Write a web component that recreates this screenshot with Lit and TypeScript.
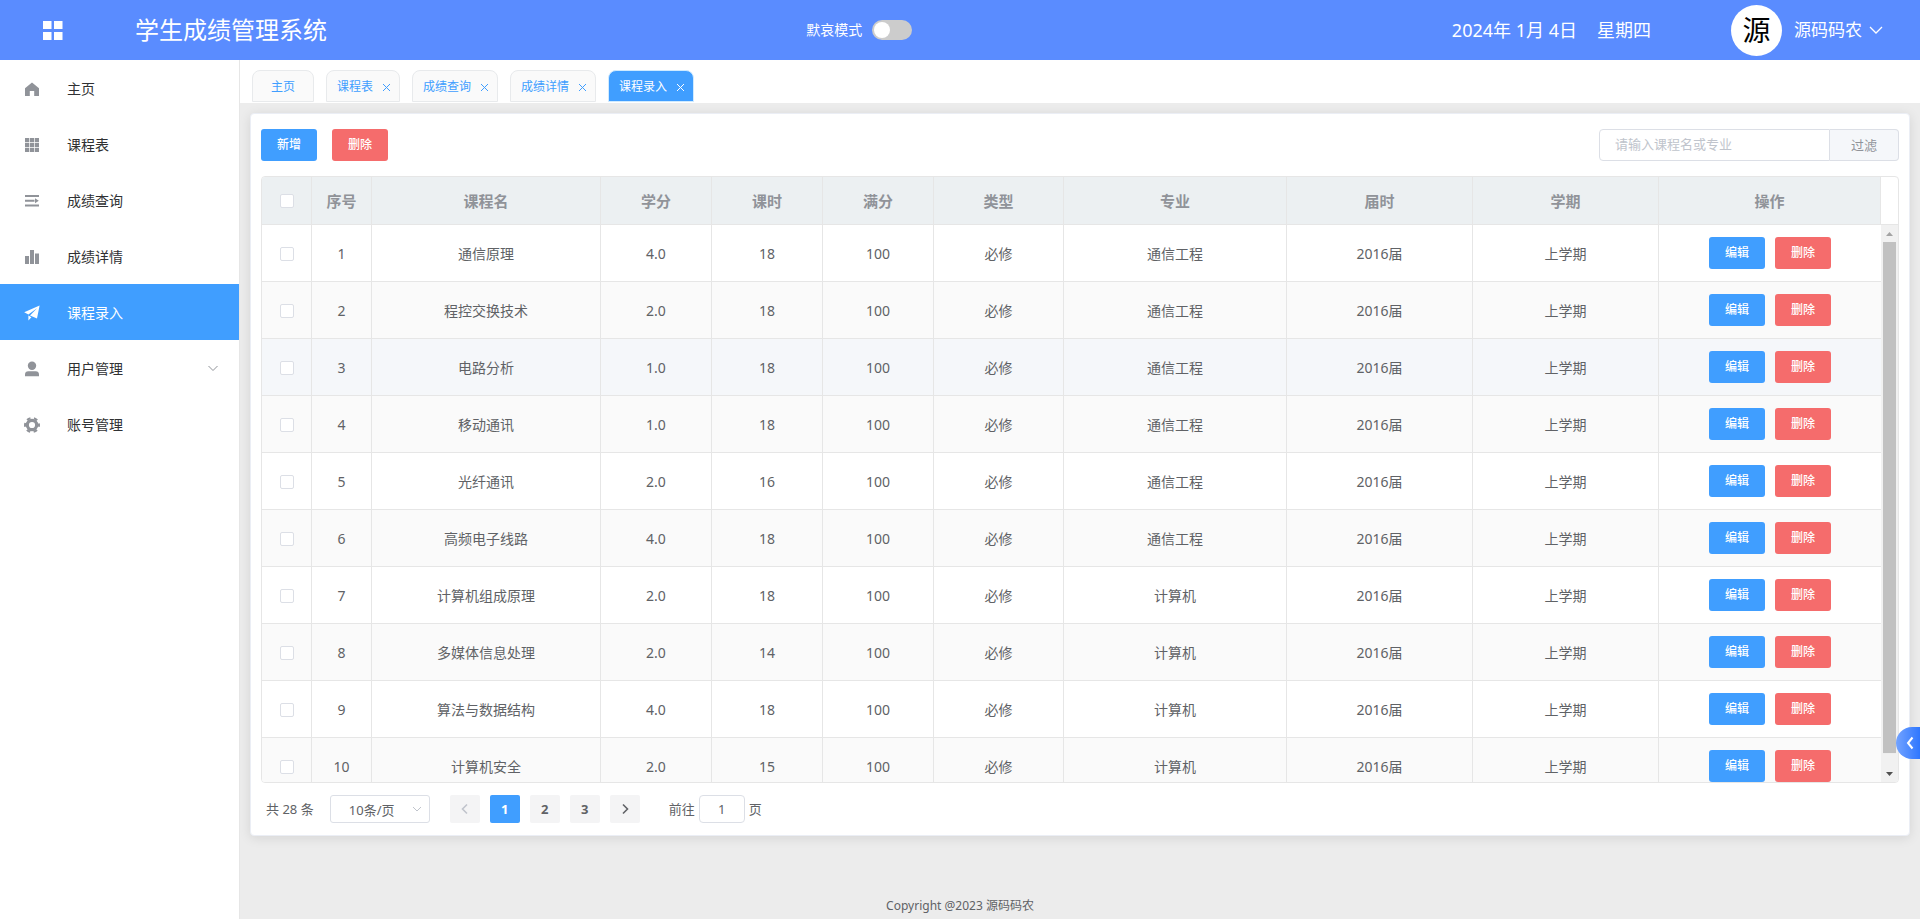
import { LitElement, html, css, svg } from "lit";
import { customElement, state } from "lit/decorators.js";
import { classMap } from "lit/directives/class-map.js";

interface Course {
  name: string;
  credit: string;
  hours: number;
  major: string;
}

const COURSES: Course[] = [
  { name: "通信原理", credit: "4.0", hours: 18, major: "通信工程" },
  { name: "程控交换技术", credit: "2.0", hours: 18, major: "通信工程" },
  { name: "电路分析", credit: "1.0", hours: 18, major: "通信工程" },
  { name: "移动通讯", credit: "1.0", hours: 18, major: "通信工程" },
  { name: "光纤通讯", credit: "2.0", hours: 16, major: "通信工程" },
  { name: "高频电子线路", credit: "4.0", hours: 18, major: "通信工程" },
  { name: "计算机组成原理", credit: "2.0", hours: 18, major: "计算机" },
  { name: "多媒体信息处理", credit: "2.0", hours: 14, major: "计算机" },
  { name: "算法与数据结构", credit: "4.0", hours: 18, major: "计算机" },
  { name: "计算机安全", credit: "2.0", hours: 15, major: "计算机" },
];

const HEADINGS = ["序号", "课程名", "学分", "课时", "满分", "类型", "专业", "届时", "学期", "操作"];

const ICONS = {
  home: svg`<path d="M9 2.6 16 8.2V16H11.2V11H6.8V16H2V8.2Z"/>`,
  grid: svg`<path d="M2 2h4.200v4.200H2zM6.900 2h4.200v4.200H6.900zM11.800 2H16v4.200h-4.200zM2 6.900h4.200v4.200H2zM6.900 6.900h4.200v4.200H6.900zM11.800 6.900H16v4.200h-4.200zM2 11.800h4.200V16H2zM6.900 11.800h4.200V16H6.900zM11.800 11.800H16V16h-4.200z"/>`,
  lines: svg`<path d="M2 3h14v2H2zM2 7.700h9.500v2H2zM2 12.400h14v2H2zM12 6.200 15.800 8.700 12 11.200z"/>`,
  bars: svg`<path d="M2 8h4v8H2zM7 2h4v14H7zM12 5.4h4V16h-4z"/>`,
  plane: svg`<path d="M16.6 1.6 1.2 8.2 5.4 10.6 14 4.2 7 11.6 14 14.6ZM5.4 11.6V16.6L8.4 13.2Z"/>`,
  user: svg`<circle cx="9" cy="5.8" r="4.200"/><path d="M2 16.2V14.6Q2 11.2 5.4 11.2H12.6Q16 11.2 16 14.6V16.2Z"/>`,
  gear: svg`<g fill="none" stroke="currentColor"><circle cx="9" cy="9" r="4.700" stroke-width="3.200"/><circle cx="9" cy="9" r="7" stroke-width="2" stroke-dasharray="3.800 3.530" stroke-dashoffset="1.900"/></g>`,
};

const MENU = [
  { label: "主页", icon: ICONS.home },
  { label: "课程表", icon: ICONS.grid },
  { label: "成绩查询", icon: ICONS.lines },
  { label: "成绩详情", icon: ICONS.bars },
  { label: "课程录入", icon: ICONS.plane, active: true },
  { label: "用户管理", icon: ICONS.user, group: true },
  { label: "账号管理", icon: ICONS.gear },
];

const TABS = ["主页", "课程表", "成绩查询", "成绩详情", "课程录入"];

@customElement("app-root")
export class AppRoot extends LitElement {
  @state() private thumb = 97;
  @state() private offset = 0;

  static styles = css`
    :host {
      display: grid;
      grid-template: 60px 1fr / 240px 1fr;
      height: 100vh;
      background: #ececec;
      color: #606266;
      font: 14px/20px "Noto Sans", "Noto Sans CJK SC", sans-serif;
    }
    * { box-sizing: border-box; }
    button, input, select { font: inherit; color: inherit; margin: 0; }
    button { border: 0; padding: 0; background: none; cursor: pointer; }
    a { color: inherit; text-decoration: none; }
    svg { display: block; fill: currentColor; }
    .stroke { fill: none; stroke: currentColor; }

    .top {
      grid-column: 1 / -1;
      display: grid;
      grid-template-columns: 4fr auto 5fr;
      align-items: center;
      background: #5a8cff;
      color: #fff;
    }
    .brand { display: flex; align-items: center; gap: 72px; padding-left: 43px; }
    .brand h1 { margin: 0; font-size: 24px; line-height: 36px; font-weight: 400; }
    .mourn { display: flex; align-items: center; gap: 10px; }
    .switch {
      appearance: none;
      width: 40px;
      height: 20px;
      padding: 2px;
      border-radius: 10px;
      background: #ccc;
      cursor: pointer;
    }
    .switch::before {
      content: "";
      display: block;
      width: 16px;
      height: 16px;
      border-radius: 50%;
      background: #fff;
    }
    .switch:checked { background: #409eff; }
    .switch:checked::before { margin-left: 20px; }
    .account { display: flex; align-items: center; justify-content: flex-end; padding-right: 37px; font-size: 18px; line-height: 28px; }
    .date { margin-right: 20px; }
    .avatar {
      display: grid;
      place-items: center;
      width: 51px;
      height: 51px;
      margin: 0 12px 0 80px;
      border-radius: 50%;
      background: #fff;
      color: #000;
      font-size: 28px;
      line-height: 40px;
    }
    .user { display: flex; align-items: center; gap: 7px; font-size: 17px; }

    .side { background: #fff; border-right: 1px solid #e6e6e6; }
    .item {
      display: flex;
      align-items: center;
      height: 56px;
      padding: 2px 20px 0 23px;
      color: #303133;
    }
    .item .icon { color: #909399; margin-right: 26px; }
    .item .more { margin-left: auto; color: #909399; }
    .item.active, .item.active .icon { background: #409eff; color: #fff; }

    .main { display: flex; flex-direction: column; min-width: 0; min-height: 0; }
    .tabs { display: flex; gap: 12px; padding: 10px 12px 1px; background: #fff; }
    .tab {
      display: flex;
      align-items: center;
      height: 32px;
      gap: 9px;
      padding: 2px 8px 0 10px;
      border: 1px solid #e8eaec;
      border-radius: 8px 8px 0 0;
      background: #fafafa;
      color: #409eff;
      font-size: 12px;
    }
    .tab.home { padding: 2px 18px 0; }
    .tab.active { background: #409eff; border-color: #d0ebff; color: #fff; }

    .card {
      flex: 1;
      min-height: 0;
      display: flex;
      flex-direction: column;
      margin: 10px 10px 0;
      padding: 15px 10px 12px;
      background: #fff;
      border: 1px solid #ebeef5;
      border-radius: 4px;
      box-shadow: 0 2px 12px rgba(0, 0, 0, 0.1);
    }
    .tools { display: flex; gap: 15px; margin-bottom: 15px; }
    .btn {
      width: 56px;
      height: 32px;
      border-radius: 3px;
      background: #409eff;
      color: #fff;
      font-size: 12px;
      font-weight: 500;
    }
    .btn.danger { background: #f56c6c; }
    .search { display: flex; width: 300px; margin-left: auto; font-size: 13px; }
    .search input {
      flex: 1;
      min-width: 0;
      height: 32px;
      padding: 0 15px 2px;
      border: 1px solid #dcdfe6;
      border-radius: 4px 0 0 4px;
    }
    .search input::placeholder { color: #c0c4cc; opacity: 1; }
    .search button {
      width: 69px;
      border: 1px solid #dcdfe6;
      border-left: 0;
      border-radius: 0 4px 4px 0;
      background: #f5f7fa;
      color: #909399;
    }

    .frame {
      flex: 1;
      min-height: 0;
      display: flex;
      border: 1px solid #e6e6e6;
      border-radius: 4px;
      overflow: hidden;
    }
    table { flex: 1; min-width: 0; display: flex; flex-direction: column; }
    thead { display: block; }
    tbody { display: block; flex: 1; min-height: 0; overflow-y: auto; scrollbar-width: none; }
    tr {
      display: grid;
      grid-template-columns: 50px 60px 229fr 111fr 111fr 111fr 130fr 223fr 186fr 186fr 222fr;
    }
    th, td {
      display: flex;
      align-items: center;
      justify-content: center;
      gap: 10px;
      min-width: 0;
      padding: 0;
      border: solid #e6e6e6;
      border-width: 0 1px 1px 0;
    }
    th { height: 48px; background: #ecf0f2; color: #909399; font-size: 15px; font-weight: 700; }
    td { height: 57px; padding-top: 2px; }
    td:last-child { border-right: 0; padding-top: 0; }
    tbody tr:nth-child(even) { background: #fafafa; }
    tbody tr.current { background: #f5f7fa; }
    .check {
      appearance: none;
      width: 14px;
      height: 14px;
      border: 1px solid #dcdfe6;
      border-radius: 2px;
      background: #fff;
    }
    .check:checked { background: #409eff; border-color: #409eff; }

    .rail { width: 17px; display: flex; flex-direction: column; }
    .corner { height: 48px; border-bottom: 1px solid #e6e6e6; }
    .track { flex: 1; min-height: 0; display: flex; flex-direction: column; background: #f1f1f1; }
    .arrow { height: 17px; display: grid; place-items: center; color: #a3a3a3; }
    .arrow.down { color: #505050; }
    .lane { flex: 1; min-height: 0; padding: 0 2px; }

    .pager { display: flex; align-items: flex-start; margin-top: 12px; padding-left: 5px; font-size: 13px; line-height: 28px; }
    .size { display: grid; align-items: center; width: 100px; margin: 0 20px 0 16px; }
    .size select {
      grid-area: 1 / 1;
      appearance: none;
      height: 28px;
      padding: 0 34px 2px 18px;
      border: 1px solid #dcdfe6;
      border-radius: 3px;
      background: #fff;
      text-align: center;
      text-align-last: center;
    }
    .size svg { grid-area: 1 / 1; justify-self: end; margin-right: 7px; color: #c0c4cc; pointer-events: none; }
    .pages { display: flex; gap: 10px; margin-right: 29px; }
    .page {
      display: grid;
      place-items: center;
      width: 30px;
      height: 28px;
      border-radius: 2px;
      background: #f4f4f5;
      font-weight: 700;
    }
    .page.active { background: #409eff; color: #fff; }
    .page:disabled { color: #c0c4cc; }
    .jump { display: flex; gap: 4px; }
    .jump input {
      width: 46px;
      height: 28px;
      padding: 0;
      border: 1px solid #dcdfe6;
      border-radius: 4px;
      text-align: center;
    }
    .foot { padding: 60px 240px 3px 0; text-align: center; font-size: 12px; }

    .drawer {
      position: fixed;
      right: 0;
      bottom: 160px;
      width: 24px;
      height: 32px;
      display: grid;
      place-items: center;
      padding-left: 4px;
      border-radius: 16px 0 0 16px;
      background: linear-gradient(90deg, #73a3ff, #2f77ff);
      color: #fff;
    }
  `;

  private track(e: Event) {
    this.measure(e.target as HTMLElement);
  }

  private measure(body: HTMLElement) {
    this.thumb = (body.clientHeight / body.scrollHeight) * 100;
    this.offset = (body.scrollTop / body.scrollHeight) * 100;
  }

  firstUpdated() {
    this.measure(this.renderRoot.querySelector("tbody") as HTMLElement);
  }

  private row(c: Course, i: number) {
    return html`<tr class=${classMap({ current: i === 2 })}>
      <td><input class="check" type="checkbox" aria-label=${c.name} /></td>
      <td>${i + 1}</td>
      <td>${c.name}</td>
      <td>${c.credit}</td>
      <td>${c.hours}</td>
      <td>100</td>
      <td>必修</td>
      <td>${c.major}</td>
      <td>2016届</td>
      <td>上学期</td>
      <td><button class="btn">编辑</button><button class="btn danger">删除</button></td>
    </tr>`;
  }

  render() {
    return html`
      <header class="top">
        <div class="brand">
          <svg width="20" height="20" viewBox="0 0 20 20"><path d="M0 1h8.500v8H0zM11 1h8.500v8H11zM0 12h8.500v8H0zM11 12h8.500v8H11z" /></svg>
          <h1>学生成绩管理系统</h1>
        </div>
        <div class="mourn">
          <label for="mourn">默哀模式</label>
          <input id="mourn" class="switch" type="checkbox" role="switch" />
        </div>
        <div class="account">
          <span class="date">2024年 1月 4日</span>
          <span>星期四</span>
          <span class="avatar">源</span>
          <a class="user" href="#">源码码农
            <svg class="stroke" width="14" height="14" viewBox="0 0 14 14" stroke-width="1.300"><path d="M1 4l6 6 6-6" /></svg>
          </a>
        </div>
      </header>

      <nav class="side">
        ${MENU.map(
          (m) => html`<a class=${classMap({ item: true, active: !!m.active })} href="#">
            <svg class="icon" width="18" height="18" viewBox="0 0 18 18">${m.icon}</svg>
            ${m.label}
            ${m.group
              ? html`<svg class="stroke more" width="12" height="12" viewBox="0 0 12 12"><path d="M1.500 3L6 7.500 10.500 3" /></svg>`
              : ""}
          </a>`
        )}
      </nav>

      <main class="main">
        <div class="tabs">
          ${TABS.map(
            (t, i) => html`<a class=${classMap({ tab: true, home: i === 0, active: i === 4 })} href="#">
              ${t}
              ${i > 0
                ? html`<svg class="stroke" width="9" height="9" viewBox="0 0 9 9"><path d="M1 1l7 7M8 1l-7 7" /></svg>`
                : ""}
            </a>`
          )}
        </div>

        <section class="card">
          <div class="tools">
            <button class="btn">新增</button>
            <button class="btn danger">删除</button>
            <div class="search">
              <input type="text" placeholder="请输入课程名或专业" aria-label="请输入课程名或专业" />
              <button>过滤</button>
            </div>
          </div>

          <div class="frame">
            <table>
              <thead>
                <tr>
                  <th><input class="check" type="checkbox" aria-label="全选" /></th>
                  ${HEADINGS.map((h) => html`<th>${h}</th>`)}
                </tr>
              </thead>
              <tbody @scroll=${this.track}>
                ${COURSES.map((c, i) => this.row(c, i))}
              </tbody>
            </table>
            <div class="rail">
              <div class="corner"></div>
              <div class="track">
                <span class="arrow"><svg width="7" height="4" viewBox="0 0 7 4"><path d="M0 4 3.500 0 7 4z" /></svg></span>
                <div class="lane">
                  <svg width="13" height="100%" aria-hidden="true"><rect width="13" y="${this.offset}%" height="${this.thumb}%" fill="#c1c1c1" /></svg>
                </div>
                <span class="arrow down"><svg width="7" height="4" viewBox="0 0 7 4"><path d="M0 0 3.500 4 7 0z" /></svg></span>
              </div>
            </div>
          </div>

          <div class="pager">
            <span>共 28 条</span>
            <div class="size">
              <select aria-label="每页条数"><option>10条/页</option></select>
              <svg class="stroke" width="12" height="12" viewBox="0 0 12 12"><path d="M2 4l4 4 4-4" /></svg>
            </div>
            <div class="pages">
              <button class="page" disabled aria-label="上一页">
                <svg class="stroke" width="12" height="12" viewBox="0 0 12 12" stroke-width="1.600"><path d="M8 1.500L3.500 6 8 10.500" /></svg>
              </button>
              <button class="page active">1</button>
              <button class="page">2</button>
              <button class="page">3</button>
              <button class="page" aria-label="下一页">
                <svg class="stroke" width="12" height="12" viewBox="0 0 12 12" stroke-width="1.600"><path d="M4 1.500L8.500 6 4 10.500" /></svg>
              </button>
            </div>
            <div class="jump">
              <label for="goto">前往</label>
              <input id="goto" type="text" .value=${"1"} />
              <span>页</span>
            </div>
          </div>
        </section>

        <footer class="foot">Copyright @2023 源码码农</footer>
      </main>

      <button class="drawer" aria-label="展开">
        <svg class="stroke" width="14" height="14" viewBox="0 0 14 14" stroke-width="2"><path d="M9.500 1.500L5 7l4.500 5.500" /></svg>
      </button>
    `;
  }
}
